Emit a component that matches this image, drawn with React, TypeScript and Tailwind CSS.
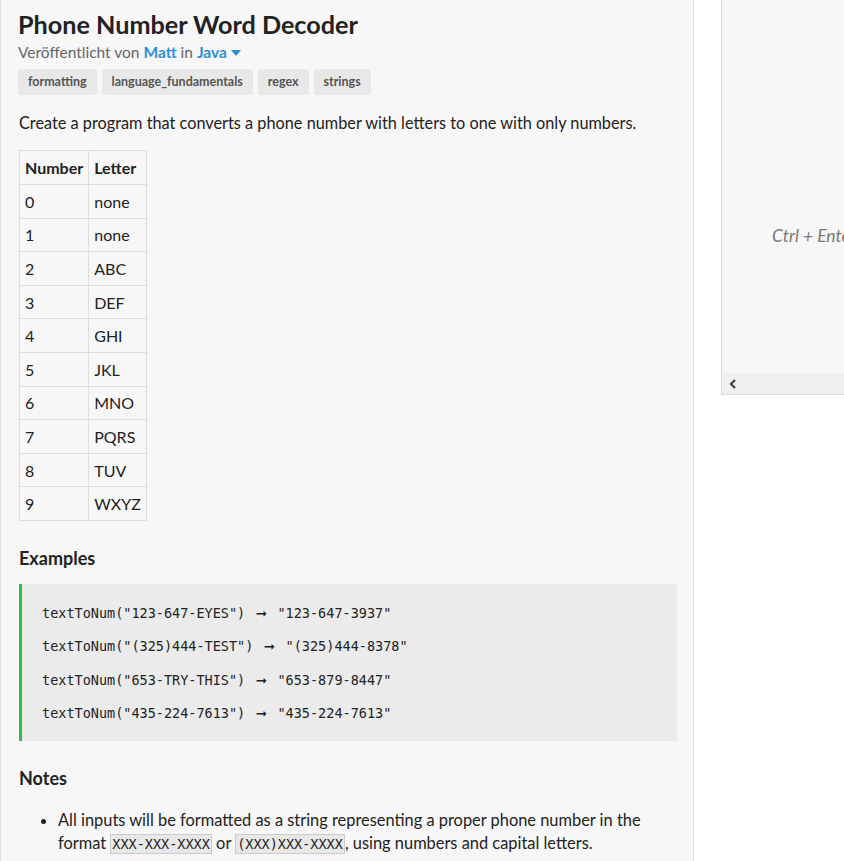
import React from "react";

const rows: [string, string][] = [
  ["0", "none"],
  ["1", "none"],
  ["2", "ABC"],
  ["3", "DEF"],
  ["4", "GHI"],
  ["5", "JKL"],
  ["6", "MNO"],
  ["7", "PQRS"],
  ["8", "TUV"],
  ["9", "WXYZ"],
];

const examples: [string, string][] = [
  ['textToNum("123-647-EYES")', '"123-647-3937"'],
  ['textToNum("(325)444-TEST")', '"(325)444-8378"'],
  ['textToNum("653-TRY-THIS")', '"653-879-8447"'],
  ['textToNum("435-224-7613")', '"435-224-7613"'],
];

const mono = { fontFamily: '"DejaVu Sans Mono", monospace' };

export default function App() {
  return (
    <div
      className="flex h-[861px] w-[844px] overflow-hidden bg-white text-[#222]"
      style={{ fontFamily: 'Lato, "Noto Sans", sans-serif' }}
    >
      <div className="w-[694px] shrink-0 border-l border-r border-[#e0e0e0] bg-[#f7f7f7] pl-[17px] pr-[17px] pt-[8px]">
        <h1 className="text-[25.2px] font-bold leading-[32px] text-[#222]">Phone Number Word Decoder</h1>
        <div className="mt-[1px] flex items-center text-[15.5px] leading-[22px] text-[#666]">
          <span>Veröffentlicht von&nbsp;</span>
          <span className="font-bold text-[#2d8fd5]">Matt</span>
          <span>&nbsp;in&nbsp;</span>
          <span className="font-bold text-[#2d8fd5]">Java</span>
          <svg width="10" height="6" viewBox="0 0 10 6" className="ml-[4px] mt-[1px]">
            <path d="M0 0 L10 0 L5 6 Z" fill="#2d8fd5" />
          </svg>
        </div>
        <div className="mt-[6px] flex gap-[5px]">
          {["formatting", "language_fundamentals", "regex", "strings"].map((t) => (
            <span
              key={t}
              className="rounded-[3px] bg-[#e8e8e8] px-[10px] text-[12.5px] font-bold leading-[26px] text-[#555]"
            >
              {t}
            </span>
          ))}
        </div>
        <p className="mt-[16px] pl-[1px] text-[16.3px] leading-[24px]">
          Create a program that converts a phone number with letters to one with only numbers.
        </p>
        <table className="mt-[15px] ml-[1px] border-collapse text-[16px]">
          <thead>
            <tr>
              <th className="h-[34px] border border-[#ddd] px-[5px] pt-[1px] text-left font-bold">Number</th>
              <th className="h-[34px] border border-[#ddd] px-[5px] pt-[1px] pr-[6px] text-left font-bold">Letter</th>
            </tr>
          </thead>
          <tbody>
            {rows.map(([n, l]) => (
              <tr key={n}>
                <td className="h-[33.6px] border border-[#ddd] px-[5px] pt-[1px]">{n}</td>
                <td className="h-[33.6px] border border-[#ddd] px-[5px] pt-[1px]">{l}</td>
              </tr>
            ))}
          </tbody>
        </table>
        <h2 className="mt-[25px] pl-[1px] text-[18px] font-bold leading-[24px]">Examples</h2>
        <div
          className="mt-[14px] ml-[1px] w-[658px] border-l-[3px] border-[#2ebd4f] bg-[#ebebeb] pb-[11px] pt-[13px] pl-[20px] text-[13.5px] text-[#222]"
          style={mono}
        >
          {examples.map(([a, b]) => (
            <div key={a} className="whitespace-pre leading-[33.3px]">
              {a}{" "}
              <span
                className="inline-block w-[16px] text-center font-bold"
                style={{ fontFamily: '"DejaVu Sans", sans-serif' }}
              >
                ➞
              </span>{" "}
              {b}
            </div>
          ))}
        </div>
        <h2 className="mt-[25px] pl-[1px] text-[18px] font-bold leading-[24px]">Notes</h2>
        <ul className="mt-[18px] list-disc pl-[40px] text-[16.4px] leading-[23px]">
          <li>
            All inputs will be formatted as a string representing a proper phone number in the format{" "}
            <code className="border border-[#ccc] bg-[#e8e8e8] px-[1px] py-[1px] text-[13.5px]" style={mono}>
              XXX-XXX-XXXX
            </code>{" "}
            or{" "}
            <code className="border border-[#ccc] bg-[#e8e8e8] px-[1px] py-[1px] text-[13.5px]" style={mono}>
              (XXX)XXX-XXXX
            </code>
            , using numbers and capital letters.
          </li>
        </ul>
      </div>
      <div className="w-[27px] shrink-0" />
      <div className="flex h-[395px] w-[400px] shrink-0 flex-col border-b border-l border-[#ddd] bg-[#f7f7f7]">
        <div className="flex-1 pl-[50px] pt-[224px]">
          <span className="text-[17.5px] italic leading-[24px] text-[#777]">Ctrl + Enter</span>
        </div>
        <div className="flex h-[21px] items-center bg-[#efefef] pl-[6px]">
          <svg width="10" height="10" viewBox="0 0 10 10">
            <path d="M7 1 L3 5 L7 9" stroke="#444" strokeWidth="2.2" fill="none" />
          </svg>
        </div>
      </div>
    </div>
  );
}
